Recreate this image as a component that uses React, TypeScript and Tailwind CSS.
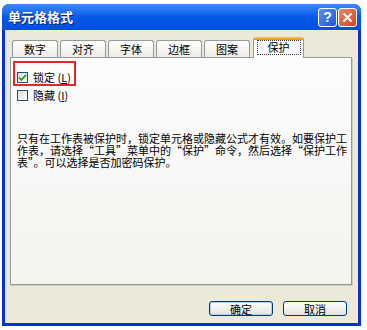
import React from "react";

const font = { fontFamily: '"Noto Sans CJK SC", "Noto Sans", sans-serif' };

function Tab({ label, active }: { label: string; active?: boolean }) {
  if (active) {
    return (
      <div className="relative z-10 -mb-[1px] ml-[1px] flex h-[21px] w-[51px] flex-col overflow-hidden rounded-t-[3px] border-x border-[#919B9C] bg-[#FCFCFE]">
        <div className="h-[3px] shrink-0 bg-gradient-to-b from-[#FFC83C] to-[#E68B2C]" />
        <div className="flex flex-1 items-start justify-center">
          <span className="border border-dotted border-[#333] px-[10px] text-[11px] leading-[13px] text-black">
            {label}
          </span>
        </div>
      </div>
    );
  }
  return (
    <div className="mr-[2px] flex h-[17px] w-[46px] items-center justify-center rounded-t-[3px] border border-b-0 border-[#919B9C] bg-gradient-to-b from-white to-[#ECEBE6] text-[11px] leading-[13px] text-black">
      {label}
    </div>
  );
}

function CheckBox({ checked }: { checked?: boolean }) {
  return (
    <div className="flex h-[11px] w-[11px] items-center justify-center border border-[#1C5180] bg-gradient-to-br from-[#DCDCD7] to-white">
      {checked && (
        <svg width="9" height="9" viewBox="0 0 9 9">
          <path d="M1 4.5 L3.4 7 L8 1.8" stroke="#21A121" strokeWidth="1.8" fill="none" />
        </svg>
      )}
    </div>
  );
}

export default function App() {
  return (
    <div className="h-[330px] w-[367px] bg-white pl-[2px] pt-[4px]" style={font}>
      <div className="flex h-[322px] w-[359px] flex-col overflow-hidden rounded-t-[7px] bg-[#0831D9]">
        {/* Title bar */}
        <div className="flex h-[26px] shrink-0 items-center bg-gradient-to-b from-[#3D8BFF] via-[#0658E8] to-[#0450D8] pl-[6px] pr-[4px]">
          <span className="text-[13px] font-bold leading-[16px] text-white [text-shadow:1px_1px_0_#0A1E7A]">
            单元格格式
          </span>
          <div className="ml-auto flex gap-[1px]">
            <div className="flex h-[19px] w-[19px] items-center justify-center rounded-[3px] border border-white bg-gradient-to-br from-[#5A8FF0] to-[#1D55D8]">
              <span className="text-[14px] font-bold leading-[14px] text-white" style={{ fontFamily: '"Liberation Sans", Arial, sans-serif' }}>?</span>
            </div>
            <div className="flex h-[19px] w-[19px] items-center justify-center rounded-[3px] border border-white bg-gradient-to-br from-[#E88A6A] to-[#D4411C]">
              <svg width="11" height="11" viewBox="0 0 11 11">
                <path d="M1.5 1.5 L9.5 9.5 M9.5 1.5 L1.5 9.5" stroke="white" strokeWidth="2" />
              </svg>
            </div>
          </div>
        </div>
        {/* Body */}
        <div className="mx-[3px] mb-[3px] flex flex-1 flex-col bg-[#ECE9D8] pl-[5px] pr-[6px] pt-[8px]">
          <div className="flex h-[19px] items-end pl-[2px]">
            <Tab label="数字" />
            <Tab label="对齐" />
            <Tab label="字体" />
            <Tab label="边框" />
            <Tab label="图案" />
            <Tab label="保护" active />
          </div>
          <div className="flex h-[228px] w-[342px] flex-col border border-[#919B9C] bg-gradient-to-b from-[#FCFCFE] to-[#F4F3EE] pl-[6px] pt-[3px] shadow-[1px_1px_0_#D0CEBF]">
            <div className="-ml-[4px] flex w-[63px] items-center gap-[5px] border-2 border-[#E8262A] pb-[1px] pl-[2px] pt-[8px]">
              <CheckBox checked />
              <span className="text-[11px] leading-[12px] text-black">锁定 (<span className="underline">L</span>)</span>
            </div>
            <div className="mt-[3px] flex items-center gap-[5px]">
              <CheckBox />
              <span className="text-[11px] leading-[12px] text-black">隐藏 (<span className="underline">I</span>)</span>
            </div>
            <p className="mt-[31px] text-[11px] leading-[12px] text-black">
              只有在工作表被保护时，锁定单元格或隐藏公式才有效。如要保护工
              <br />
              作表，请选择“工具”菜单中的“保护”命令，然后选择“保护工作
              <br />
              表”。可以选择是否加密码保护。
            </p>
          </div>
          <div className="mt-[16px] flex justify-end gap-[10px] pr-[5px]">
            <button className="flex h-[15px] w-[64px] items-center justify-center rounded-[3px] border border-[#003C74] bg-gradient-to-b from-white to-[#E3E2DA] text-[11px] leading-[12px] text-black shadow-[inset_0_0_0_1px_#B7CBF2]">
              确定
            </button>
            <button className="flex h-[15px] w-[64px] items-center justify-center rounded-[3px] border border-[#003C74] bg-gradient-to-b from-white to-[#E3E2DA] text-[11px] leading-[12px] text-black">
              取消
            </button>
          </div>
        </div>
      </div>
    </div>
  );
}
